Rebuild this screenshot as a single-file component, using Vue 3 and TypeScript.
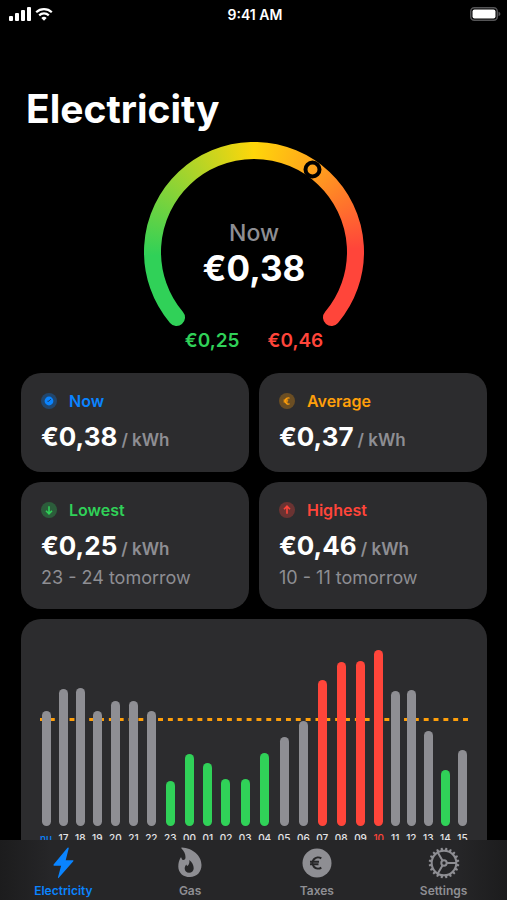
<script setup lang="ts">
type Tone = 'blue' | 'orange' | 'green' | 'red'
type Glyph = 'clock' | 'euro' | 'down' | 'up'
type BarTone = 'normal' | 'low' | 'high'

interface Stat {
  label: string
  tone: Tone
  glyph: Glyph
  price: string
  period?: string
}

interface Hour {
  label: string
  height: number
  tone: BarTone
}

const stats: Stat[] = [
  { label: 'Now', tone: 'blue', glyph: 'clock', price: '€0,38' },
  { label: 'Average', tone: 'orange', glyph: 'euro', price: '€0,37' },
  { label: 'Lowest', tone: 'green', glyph: 'down', price: '€0,25', period: '23 - 24 tomorrow' },
  { label: 'Highest', tone: 'red', glyph: 'up', price: '€0,46', period: '10 - 11 tomorrow' },
]

const hours: Hour[] = [
  { label: 'nu', height: 115, tone: 'normal' },
  { label: '17', height: 137, tone: 'normal' },
  { label: '18', height: 138, tone: 'normal' },
  { label: '19', height: 115, tone: 'normal' },
  { label: '20', height: 125, tone: 'normal' },
  { label: '21', height: 125, tone: 'normal' },
  { label: '22', height: 115, tone: 'normal' },
  { label: '23', height: 45, tone: 'low' },
  { label: '00', height: 72, tone: 'low' },
  { label: '01', height: 63, tone: 'low' },
  { label: '02', height: 47, tone: 'low' },
  { label: '03', height: 47, tone: 'low' },
  { label: '04', height: 73, tone: 'low' },
  { label: '05', height: 89, tone: 'normal' },
  { label: '06', height: 105, tone: 'normal' },
  { label: '07', height: 146, tone: 'high' },
  { label: '08', height: 164, tone: 'high' },
  { label: '09', height: 165, tone: 'high' },
  { label: '10', height: 176, tone: 'high' },
  { label: '11', height: 135, tone: 'normal' },
  { label: '12', height: 136, tone: 'normal' },
  { label: '13', height: 95, tone: 'normal' },
  { label: '14', height: 56, tone: 'low' },
  { label: '15', height: 76, tone: 'normal' },
]

const teeth: number[] = Array.from({ length: 20 }, (_, i) => i * 18)
</script>

<template>
  <div class="app">
    <header class="status">
      <div class="signal">
        <svg width="22" height="14" viewBox="0 0 22 14" aria-hidden="true">
          <rect x="0" y="9" width="4" height="5" rx="1" />
          <rect x="6" y="6" width="4" height="8" rx="1" />
          <rect x="12" y="3" width="4" height="11" rx="1" />
          <rect x="18" y="0" width="4" height="14" rx="1" />
        </svg>
        <svg width="18" height="14" viewBox="0 0 18 14" aria-hidden="true">
          <path d="M1.2 5.2a11.2 11.2 0 0 1 15.6 0" class="wave" />
          <path d="M4.2 8.4a6.9 6.9 0 0 1 9.6 0" class="wave" />
          <path d="M9 13.8l-2.7-2.8a3.9 3.9 0 0 1 5.4 0z" />
        </svg>
      </div>
      <time class="clock">9:41 AM</time>
      <div class="power">
        <svg width="31" height="14" viewBox="0 0 31 14" aria-hidden="true">
          <rect x="0.75" y="0.75" width="26.5" height="12.5" rx="3.5" class="shell" />
          <rect x="2.5" y="2.5" width="23" height="9" rx="2" />
          <path d="M28.5 4.8c1.2.4 1.9 1.2 1.9 2.2s-.7 1.8-1.9 2.2z" class="nub" />
        </svg>
      </div>
    </header>

    <main class="content">
      <h1>Electricity</h1>

      <section class="gauge" aria-label="Current price">
        <svg width="220" height="188" viewBox="0 0 220 188" aria-hidden="true">
          <mask id="ring" maskUnits="userSpaceOnUse" x="0" y="0" width="220" height="220">
            <path d="M32.5 175.5A101.5 101.5 0 1 1 187.5 175.5" class="arc" />
          </mask>
          <foreignObject x="0" y="0" width="220" height="220" mask="url(#ring)">
            <div class="spectrum"></div>
          </foreignObject>
          <circle cx="168.5" cy="27.5" r="7" class="marker" />
        </svg>
        <div class="reading">
          <span class="reading-label">Now</span>
          <strong class="reading-value">€0,38</strong>
        </div>
        <div class="range">
          <span class="green">€0,25</span>
          <span class="red">€0,46</span>
        </div>
      </section>

      <section class="stats">
        <article v-for="stat in stats" :key="stat.label" class="card stat">
          <h2 :class="stat.tone">
            <svg width="16" height="16" viewBox="0 0 16 16" aria-hidden="true">
              <circle cx="8" cy="8" r="8" class="halo" />
              <template v-if="stat.glyph === 'clock'">
                <circle cx="8" cy="8" r="4.4" class="solid" />
                <path d="M8 8.2L9.8 6M8 8.2L6.4 8.2" class="hands" />
              </template>
              <path v-else-if="stat.glyph === 'euro'" d="M10.6 5.2A3.1 3.1 0 1 0 10.6 10.8M4.6 7.2h4.6M4.6 8.8h4.2" class="line thin" />
              <path v-else-if="stat.glyph === 'down'" d="M8 4.2v7.4M5 8.8l3 3 3-3" class="line" />
              <path v-else d="M8 11.8V4.4M5 7.2l3-3 3 3" class="line" />
            </svg>
            {{ stat.label }}
          </h2>
          <p class="price"><strong>{{ stat.price }}</strong><span>/ kWh</span></p>
          <p v-if="stat.period" class="period">{{ stat.period }}</p>
        </article>
      </section>

      <section class="card chart" aria-label="Price per hour">
        <svg class="average" width="100%" height="3" aria-hidden="true">
          <line x1="0" y1="1.5" x2="100%" y2="1.5" pathLength="87" />
        </svg>
        <ol class="bars">
          <li v-for="hour in hours" :key="hour.label" :class="hour.tone">
            <span class="bar" :style="{ height: hour.height + 'px' }"></span>
            <span class="hour" :class="{ current: hour.label === 'nu', peak: hour.label === '10' }">{{ hour.label }}</span>
          </li>
        </ol>
      </section>
    </main>

    <nav class="tabs">
      <a href="#electricity" class="active" aria-current="page">
        <svg width="32" height="32" viewBox="0 0 32 32" aria-hidden="true">
          <path d="M20.500.8L6.600 17.600q-.7 1 .5 1.100h7L11 30.300q-.3 1.400.8.5L26.300 14.300q.7-1-.5-1.100h-7.100L21.700 1.500q.1-1.500-1.200-.7z" />
        </svg>
        <span>Electricity</span>
      </a>
      <a href="#gas">
        <svg width="32" height="32" viewBox="0 0 32 32" aria-hidden="true">
          <path fill-rule="evenodd" d="M8 .6C18 .9 27.500 8.500 27.500 18c0 7-4.700 12-11.500 12C9 30 4.300 25.600 4.300 19.400c0-3.200.8-6.200 2.200-8.600.3-.5.8-.5 1 .1.300 1.200.8 1.900 1.500 2.100C10.600 13.200 11.500 12 11.500 10.200c0-3.200-1.500-6.100-4-8.700-.4-.5-.1-.9.500-.9zM15.300 13c.5 2.900-.4 4.600-1.900 6-.5-.3-.9-.8-1.100-1.500-1.100 1.400-1.600 2.700-1.600 4.100 0 2.500 1.800 4.200 4.400 4.200 2.700 0 4.600-1.800 4.600-4.500 0-3.300-1.600-6.200-4.400-8.300z" />
        </svg>
        <span>Gas</span>
      </a>
      <a href="#taxes">
        <svg width="32" height="32" viewBox="0 0 32 32" aria-hidden="true">
          <circle cx="16" cy="16" r="14.500" />
          <path d="M20.300 11.400A5.600 5.600 0 1 0 20.300 20.600M9 14.700h9M9 17.300h8.500" class="cut" />
        </svg>
        <span>Taxes</span>
      </a>
      <a href="#settings">
        <svg width="32" height="32" viewBox="0 0 32 32" aria-hidden="true">
          <g class="gear">
            <circle cx="16" cy="16" r="12.300" />
            <circle cx="16" cy="16" r="2.700" />
            <path d="M18.700 16H28.300M14.600 13.700L9.800 5.400M14.600 18.300L9.800 26.600" />
          </g>
          <path v-for="angle in teeth" :key="angle" d="M14.500 4L15.100.7h1.800L17.500 4z" :transform="`rotate(${angle + 9} 16 16)`" />
        </svg>
        <span>Settings</span>
      </a>
    </nav>
  </div>
</template>

<style>
body {
  background: #000;
}
</style>

<style scoped>
.app {
  display: flex;
  flex-direction: column;
  height: 100vh;
  background: #000;
  color: #fff;
  font-family: Inter, "Liberation Sans", sans-serif;
}

h1,
h2,
p,
ol {
  margin: 0;
  padding: 0;
}

svg {
  display: block;
}

.status {
  display: grid;
  grid-template-columns: 1fr auto 1fr;
  align-items: center;
  flex: none;
  height: 28px;
  padding: 0 6px 0 9px;
}

.status svg {
  fill: #fff;
}

.signal {
  display: flex;
  gap: 4px;
}

.status .wave {
  fill: none;
  stroke: #fff;
  stroke-width: 2.2;
}

.status .shell {
  fill: none;
  stroke: #545456;
  stroke-width: 1.5;
}

.status .nub {
  fill: #545456;
}

.clock {
  font-size: 14px;
  font-weight: 600;
}

.power {
  display: flex;
  justify-content: flex-end;
}

.content {
  flex: 1;
  min-height: 0;
  overflow-y: auto;
  padding: 56px 20px 20px 21px;
  scrollbar-width: none;
}

h1 {
  padding-left: 5px;
  font-size: 39px;
  line-height: 50px;
  font-weight: 700;
}

.gauge {
  display: grid;
  justify-items: center;
  padding-top: 8px;
}

.gauge > svg,
.reading {
  grid-area: 1 / 1;
}

.spectrum {
  height: 220px;
  background: conic-gradient(#ffd60a 0deg, #ff9f1e 38deg, #ff453a 88deg, #ff453a 180deg, #30d158 180deg, #30d158 268deg, #ffd60a 360deg);
}

.arc {
  fill: none;
  stroke: #fff;
  stroke-width: 17;
  stroke-linecap: round;
}

.marker {
  fill: none;
  stroke: #000;
  stroke-width: 4;
}

.reading {
  display: flex;
  flex-direction: column;
  align-items: center;
  padding-top: 77px;
}

.reading-label {
  color: #8e8e93;
  font-size: 23px;
  line-height: 28px;
  font-weight: 500;
}

.reading-value {
  font-size: 35px;
  line-height: 42px;
  font-weight: 700;
}

.range {
  display: flex;
  gap: 28px;
  font-size: 19px;
  line-height: 22px;
  font-weight: 600;
}

.blue {
  color: #0a84ff;
}

.orange {
  color: #ff9f0a;
}

.green {
  color: #30d158;
}

.red {
  color: #ff453a;
}

.stats {
  display: grid;
  grid-template-columns: 1fr 1fr;
  gap: 10px;
  padding: 21px 0 10px;
}

.card {
  border-radius: 20px;
  background: #2c2c2e;
}

.stat {
  padding: 17px 20px 19px;
}

.stat h2 {
  display: flex;
  align-items: center;
  gap: 12px;
  font-size: 16px;
  line-height: 22px;
  font-weight: 600;
}

.halo {
  fill: currentColor;
  opacity: 0.3;
}

.solid {
  fill: currentColor;
}

.hands {
  fill: none;
  stroke: #1c3f68;
  stroke-width: 1;
}

.line {
  fill: none;
  stroke: currentColor;
  stroke-width: 1.6;
}

.line.thin {
  stroke-width: 1.2;
}

.price {
  display: flex;
  align-items: baseline;
  gap: 4px;
  padding-top: 8px;
}

.price strong {
  font-size: 26px;
  line-height: 33px;
  font-weight: 700;
}

.price span {
  color: #8e8e93;
  font-size: 17px;
  line-height: 20px;
  font-weight: 600;
}

.period {
  padding-top: 4px;
  color: #8e8e93;
  font-size: 18px;
  line-height: 24px;
}

.chart {
  display: grid;
  padding: 31px 19px 24px;
}

.average {
  grid-area: 1 / 1;
  margin-top: 68px;
  stroke: #ff9f0a;
  stroke-width: 3;
  stroke-dasharray: 1 1;
}

.bars {
  grid-area: 1 / 1;
  z-index: 1;
  display: flex;
  justify-content: space-between;
  align-items: flex-end;
  list-style: none;
}

.bars li {
  display: flex;
  flex-direction: column;
  align-items: center;
  gap: 6px;
}

.bar {
  width: 9px;
  border-radius: 5px;
  background: #8e8e93;
}

.low .bar {
  background: #30d158;
}

.high .bar {
  background: #ff453a;
}

.hour {
  color: #e5e5e7;
  font-size: 10px;
  line-height: 12px;
  font-weight: 500;
}

.hour.current {
  color: #0a84ff;
}

.hour.peak {
  color: #ff453a;
}

.tabs {
  display: grid;
  grid-template-columns: repeat(4, 1fr);
  flex: none;
  height: 60px;
  background: linear-gradient(90deg, #1c1c1d, #262628 10%, #262628 90%, #1c1c1d);
}

.tabs a {
  display: flex;
  flex-direction: column;
  align-items: center;
  padding-top: 7px;
  color: #8e8e93;
  font-size: 12px;
  line-height: 14px;
  font-weight: 600;
  text-decoration: none;
}

.tabs a > span {
  padding-top: 5px;
}

.tabs svg {
  fill: currentColor;
}

.tabs a.active {
  color: #0a84ff;
}

.tabs .cut {
  fill: none;
  stroke: #262628;
  stroke-width: 2;
}

.tabs .gear {
  fill: none;
  stroke: currentColor;
  stroke-width: 2;
}
</style>
